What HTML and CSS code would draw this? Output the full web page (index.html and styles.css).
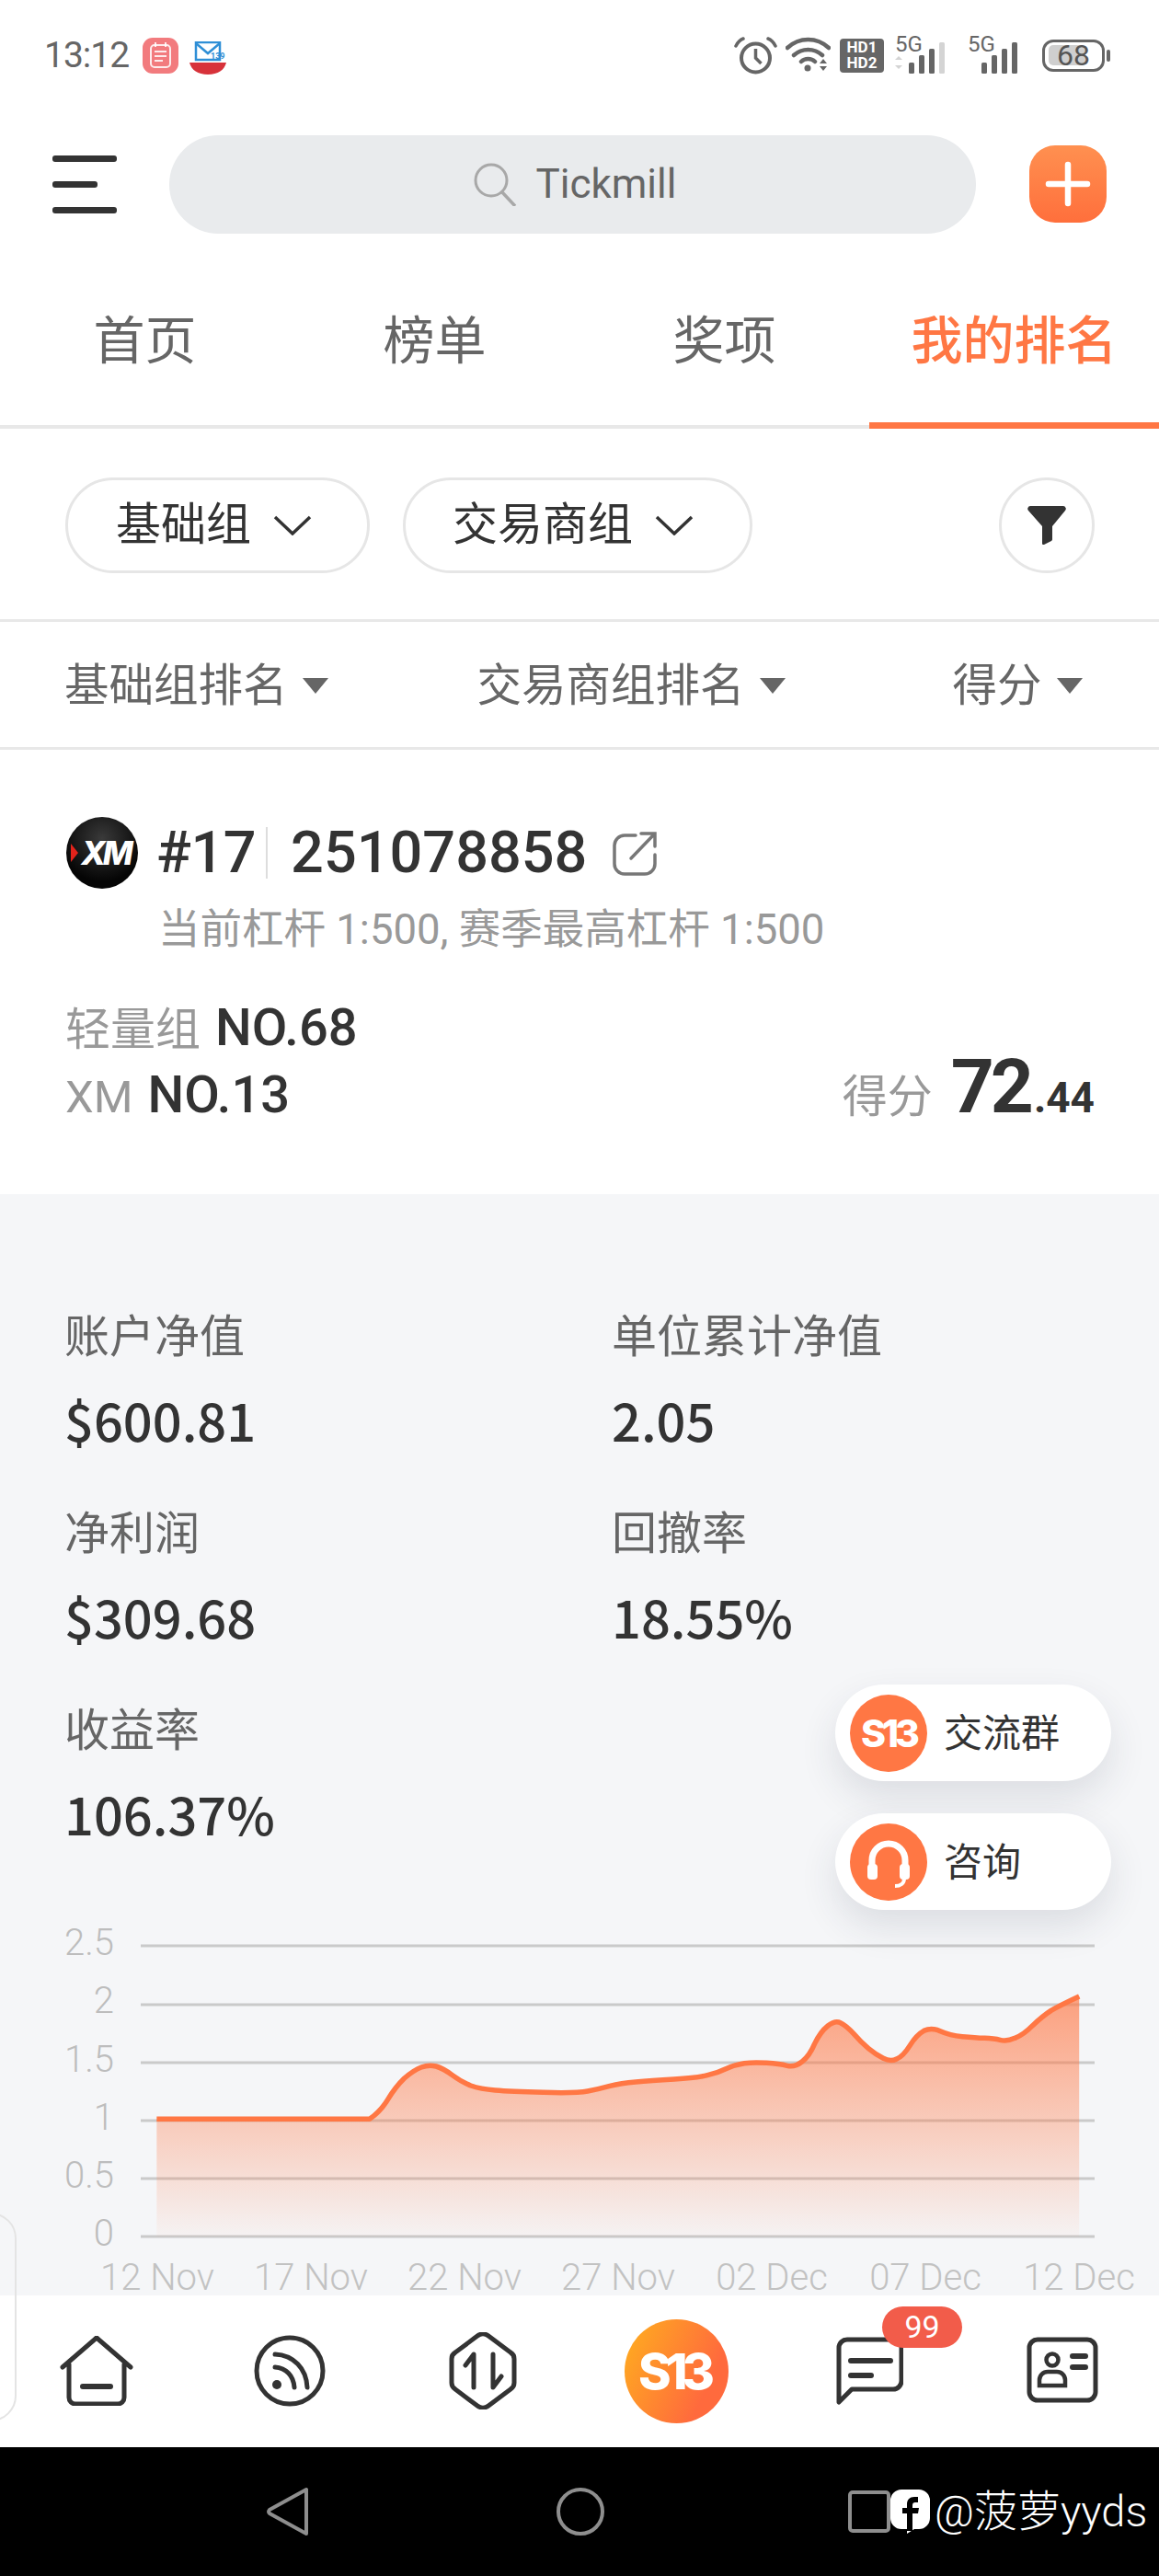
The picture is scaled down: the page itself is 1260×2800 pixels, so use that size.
FILE: index.html
```html
<!DOCTYPE html>
<html lang="zh-CN">
<head>
<meta charset="utf-8">
<title>我的排名</title>
<link rel="stylesheet" href="styles.css">
</head>
<body>
<div class="app">
  <div class="status">
    <div class="status-left">
      <span class="time">13:12</span>
      <svg class="calendar" viewBox="0 0 39 39"><rect width="39" height="39" rx="11" fill="#f27b7e"/><rect x="9" y="8" width="21" height="24" rx="4" fill="none" stroke="#fff" stroke-opacity=".85" stroke-width="2"/><path d="M14 5v5M25 5v5M13 15h13M13 20h13M13 25h9" stroke="#fff" stroke-opacity=".85" stroke-width="2"/></svg>
      <svg class="mail" viewBox="0 0 40 36"><path d="M7 1h26v19H7z" fill="#fff" stroke="#2f8fd6" stroke-width="2.5"/><path d="M7 2l13 11L33 2" fill="none" stroke="#2f8fd6" stroke-width="2.5"/><text x="23" y="19" class="mail-num">139</text><path d="M0 23h40c-2 8-9 13-20 13S2 31 0 23z" fill="#d7323a"/></svg>
    </div>
    <div class="status-right">
      <svg class="alarm" viewBox="0 0 47 41"><circle cx="23.500" cy="23" r="15.500" fill="none" stroke="#666" stroke-width="4"/><path d="M23.500 13v10l6 6" fill="none" stroke="#666" stroke-width="3.500"/><path d="M2 10c2-4 5-7 8-8M45 10c-2-4-5-7-8-8" fill="none" stroke="#666" stroke-width="3.500" stroke-linecap="round"/></svg>
      <svg class="wifi" viewBox="0 0 49 40"><path d="M2 12c13-12 32-12 45 0M9 20c9-8 22-8 31 0M17 27c4-4 11-4 15 0" fill="none" stroke="#666" stroke-width="4.500" stroke-linecap="round"/><circle cx="24" cy="34" r="3.500" fill="#666"/><path d="M37 29l4-5 4 5zM37 32l4 5 4-5z" fill="#666"/></svg>
      <div class="hd"><span>HD1</span><span>HD2</span></div>
      <div class="sim sim-first">
        <span class="sim-label">5G</span>
        <svg class="bars" viewBox="0 0 65 36"><path d="M0 21l4-4 4 4zM0 27l4 4 4-4z" fill="#d4d4d4"/><rect x="15" y="24" width="6" height="12" rx="1.500" fill="#666"/><rect x="26" y="16" width="6" height="20" rx="1.500" fill="#666"/><rect x="37" y="9" width="6" height="27" rx="1.500" fill="#666"/><rect x="48" y="2" width="6" height="34" rx="1.500" fill="#d4d4d4"/></svg>
      </div>
      <div class="sim">
        <span class="sim-label">5G</span>
        <svg class="bars" viewBox="0 0 65 36"><rect x="15" y="24" width="6" height="12" rx="1.500" fill="#666"/><rect x="26" y="16" width="6" height="20" rx="1.500" fill="#666"/><rect x="37" y="9" width="6" height="27" rx="1.500" fill="#666"/><rect x="48" y="2" width="6" height="34" rx="1.500" fill="#666"/></svg>
      </div>
      <div class="battery"><div class="battery-body"><div class="battery-fill"></div><span class="battery-num">68</span></div><div class="battery-tip"></div></div>
    </div>
  </div>

  <header class="top">
    <div class="burger"><i></i><i class="short"></i><i></i></div>
    <div class="search">
      <svg class="search-icon" viewBox="0 0 48 48"><circle cx="20" cy="20" r="17" fill="none" stroke="#a8a8a8" stroke-width="3"/><path d="M32 33l14 15" stroke="#a8a8a8" stroke-width="3.500"/></svg>
      <span>Tickmill</span>
    </div>
    <div class="plus"><svg viewBox="0 0 84 84"><path d="M42 21v42M21 42h42" stroke="#fff" stroke-width="6.500" stroke-linecap="round"/></svg></div>
  </header>

  <nav class="tabs">
    <div class="tab">首页</div>
    <div class="tab">榜单</div>
    <div class="tab">奖项</div>
    <div class="tab active">我的排名</div>
  </nav>

  <section class="filters">
    <div class="chip chip-a">基础组<svg class="chev" viewBox="0 0 42 22"><path d="M2 2l19 18L40 2" fill="none" stroke="#333" stroke-width="3.500"/></svg></div>
    <div class="chip chip-b">交易商组<svg class="chev" viewBox="0 0 42 22"><path d="M2 2l19 18L40 2" fill="none" stroke="#333" stroke-width="3.500"/></svg></div>
    <div class="round"><svg viewBox="0 0 42 42"><path d="M3 0h36a3 3 0 0 1 2 5L27 22v14a2 2 0 0 1-1 2l-8 4a1.500 1.500 0 0 1-2-1V22L1 5a3 3 0 0 1 2-5z" fill="#333"/></svg></div>
  </section>

  <section class="sorts">
    <div class="sort sort-a">基础组排名<i></i></div>
    <div class="sort sort-b">交易商组排名<i></i></div>
    <div class="sort sort-c">得分<i></i></div>
  </section>

  <section class="card">
    <div class="head">
      <div class="xm"><b class="xm-arrow"></b><span>XM</span></div>
      <span class="rank">#17</span>
      <span class="sep"></span>
      <span class="account">251078858</span>
      <svg class="share" viewBox="0 0 48 49"><path d="M25 5H13A11 11 0 0 0 2 16v20a11 11 0 0 0 11 11h22a11 11 0 0 0 11-11V26" fill="none" stroke="#777" stroke-width="3.500" stroke-linecap="round"/><path d="M20 30L45 4M31 3h15v14" fill="none" stroke="#777" stroke-width="3.500" stroke-linecap="round"/></svg>
    </div>
    <p class="lever">当前杠杆 1:500, 赛季最高杠杆 1:500</p>
    <div class="rank-row"><span class="muted">轻量组</span><strong>NO.68</strong></div>
    <div class="rank-row split">
      <div><span class="muted">XM</span><strong>NO.13</strong></div>
      <div class="score"><span class="muted">得分</span><b class="big">72</b><b class="small">.44</b></div>
    </div>
  </section>

  <main class="panel">
    <div class="stats">
      <div class="stat"><div class="stat-label">账户净值</div><div class="stat-value">$600.81</div></div>
      <div class="stat"><div class="stat-label">单位累计净值</div><div class="stat-value">2.05</div></div>
      <div class="stat"><div class="stat-label">净利润</div><div class="stat-value">$309.68</div></div>
      <div class="stat"><div class="stat-label">回撤率</div><div class="stat-value">18.55%</div></div>
      <div class="stat"><div class="stat-label">收益率</div><div class="stat-value">106.37%</div></div>
    </div>

    <svg class="chart" viewBox="0 0 1260 420">
      <defs>
        <linearGradient id="area" gradientUnits="userSpaceOnUse" x1="0" y1="270" x2="0" y2="1053">
          <stop offset="0" stop-color="#ff7744" stop-opacity=".68"/>
          <stop offset="1" stop-color="#ff7744" stop-opacity=".03"/>
        </linearGradient>
      </defs>
      <g class="grid">
        <path d="M153 35H1190M153 99H1190M153 162H1190M153 225H1190M153 288H1190M153 351H1190"/>
      </g>
      <g class="y-labels">
        <text x="124" y="45">2.5</text>
        <text x="124" y="108">2</text>
        <text x="124" y="172">1.5</text>
        <text x="124" y="235">1</text>
        <text x="124" y="298">0.5</text>
        <text x="124" y="361">0</text>
      </g>
      <g transform="scale(.80357 .33333)">
        <path fill="url(#area)" d="M212 670L500 670Q515 645 525 605Q535 565 547 537Q560 510 570 501Q580 492 590 498Q600 505 612 527Q625 550 637 561Q650 572 670 576Q690 580 735 583Q780 586 795 579Q810 572 825 562Q840 553 860 549Q880 545 912 540Q945 535 957 527Q970 520 982 506Q995 492 1007 488Q1020 484 1037 487Q1055 490 1065 496Q1075 502 1085 483Q1095 465 1102 425Q1110 385 1120 366Q1130 347 1137 356Q1145 365 1155 392Q1165 420 1175 440Q1185 460 1195 472Q1205 484 1213 474Q1222 465 1231 430Q1240 395 1250 382Q1260 370 1272 383Q1285 397 1302 401Q1320 405 1332 406Q1345 407 1353 412Q1362 418 1373 406Q1385 395 1397 365Q1410 335 1422 316Q1435 298 1460 270L1460 1053L212 1053Z"/>
        <path class="line" d="M212 670L500 670Q515 645 525 605Q535 565 547 537Q560 510 570 501Q580 492 590 498Q600 505 612 527Q625 550 637 561Q650 572 670 576Q690 580 735 583Q780 586 795 579Q810 572 825 562Q840 553 860 549Q880 545 912 540Q945 535 957 527Q970 520 982 506Q995 492 1007 488Q1020 484 1037 487Q1055 490 1065 496Q1075 502 1085 483Q1095 465 1102 425Q1110 385 1120 366Q1130 347 1137 356Q1145 365 1155 392Q1165 420 1175 440Q1185 460 1195 472Q1205 484 1213 474Q1222 465 1231 430Q1240 395 1250 382Q1260 370 1272 383Q1285 397 1302 401Q1320 405 1332 406Q1345 407 1353 412Q1362 418 1373 406Q1385 395 1397 365Q1410 335 1422 316Q1435 298 1460 270"/>
      </g>
      <g class="x-labels">
        <text x="171" y="409">12 Nov</text>
        <text x="338" y="409">17 Nov</text>
        <text x="505" y="409">22 Nov</text>
        <text x="672" y="409">27 Nov</text>
        <text x="839" y="409">02 Dec</text>
        <text x="1006" y="409">07 Dec</text>
        <text x="1173" y="409">12 Dec</text>
      </g>
    </svg>

    <div class="floats">
      <div class="float"><span class="float-icon s13-small">S13</span><span class="float-text">交流群</span></div>
      <div class="float"><span class="float-icon"><svg viewBox="0 0 84 84"><path d="M24 50V40a18 18 0 0 1 36 0v10" fill="none" stroke="#fff" stroke-width="7"/><rect x="19" y="44" width="11" height="17" rx="4" fill="#fff"/><rect x="54" y="44" width="11" height="17" rx="4" fill="#fff"/><path d="M59 60c0 5-4 8-10 8" fill="none" stroke="#fff" stroke-width="4"/></svg></span><span class="float-text">咨询</span></div>
    </div>
  </main>

  <div class="edge"></div>

  <footer class="tabbar">
    <div class="tb-item">
      <svg class="i-home" viewBox="0 0 80 76"><path d="M3 34L40 2l37 32M10 31v36a7 7 0 0 0 7 7h46a7 7 0 0 0 7-7V31" fill="none" stroke="#333" stroke-width="5" stroke-linecap="round" stroke-linejoin="round"/><path d="M25 55h30" stroke="#333" stroke-width="6" stroke-linecap="round"/></svg>
    </div>
    <div class="tb-item">
      <svg class="i-rss" viewBox="0 0 80 80"><circle cx="40" cy="40" r="36" fill="none" stroke="#333" stroke-width="5"/><circle cx="26" cy="55" r="5" fill="#333"/><path d="M24 36c12 1 20 9 21 22M24 22c20 1 34 15 35 36" fill="none" stroke="#333" stroke-width="5" stroke-linecap="round"/></svg>
    </div>
    <div class="tb-item">
      <svg class="i-hex" viewBox="0 0 74 84"><path d="M31 4a10 10 0 0 1 12 0l24 18a8 8 0 0 1 4 7v26a8 8 0 0 1-4 7L43 80a10 10 0 0 1-12 0L7 62a8 8 0 0 1-4-7V29a8 8 0 0 1 4-7z" fill="none" stroke="#333" stroke-width="5"/><path d="M27 60V24L18 36M48 24v36l9-12" fill="none" stroke="#333" stroke-width="5" stroke-linecap="round" stroke-linejoin="round"/></svg>
    </div>
    <div class="tb-item">
      <span class="s13">S13</span>
    </div>
    <div class="tb-item">
      <svg class="i-msg" viewBox="0 0 74 76"><path d="M4 72V13a9 9 0 0 1 9-9h50a9 9 0 0 1 9 9v36a9 9 0 0 1-9 9H18z" fill="none" stroke="#333" stroke-width="5" stroke-linejoin="round"/><path d="M17 27h43M17 43h22" stroke="#333" stroke-width="6" stroke-linecap="round"/></svg>
      <span class="badge">99</span>
    </div>
    <div class="tb-item">
      <svg class="i-card" viewBox="0 0 78 72"><rect x="3" y="3" width="72" height="66" rx="9" fill="none" stroke="#333" stroke-width="5"/><circle cx="28" cy="25" r="6.500" fill="none" stroke="#333" stroke-width="4.500"/><path d="M14 53V47a9 9 0 0 1 9-9h10a9 9 0 0 1 9 9v6z" fill="none" stroke="#333" stroke-width="4.500"/><path d="M50 21h14M50 33h14" stroke="#333" stroke-width="6" stroke-linecap="round"/></svg>
    </div>
  </footer>

  <div class="sysnav">
    <svg class="nav-back" viewBox="0 0 46 54"><path d="M43 3v48L3 29a3 3 0 0 1 0-4z" fill="none" stroke="#8e8e8e" stroke-width="4" stroke-linejoin="round"/></svg>
    <svg class="nav-home" viewBox="0 0 52 52"><circle cx="26" cy="26" r="24" fill="none" stroke="#8e8e8e" stroke-width="4"/></svg>
    <span class="nav-recent"></span>
    <div class="watermark">
      <svg class="fb" viewBox="0 0 43 48"><path d="M12 0h19a12 12 0 0 1 12 12v19a12 12 0 0 1-12 12H26l-8 5v-5h-6A12 12 0 0 1 0 31V12A12 12 0 0 1 12 0z" fill="#fff"/><path d="M30 8h-4c-5 0-8 3-8 8v4h-5v6h5v19h6V26h6l1-6h-7v-3c0-2 1-3 3-3h3z" fill="#000"/></svg>
      <span>@菠萝yyds</span>
    </div>
  </div>
</div>
</body>
</html>
```
FILE: styles.css
```css
* { box-sizing: border-box; }
html, body { margin: 0; padding: 0; background: #fff; }
body { font-family: "Roboto", "Noto Sans CJK SC", sans-serif; color: #333; }
.app { position: relative; width: 1260px; height: 2800px; overflow: hidden; }

/* status bar */
.status { height: 120px; padding: 0 53px 0 48px; display: flex; justify-content: space-between; align-items: center; }
.status-left { display: flex; align-items: center; }
.time { font-size: 39px; letter-spacing: -1px; color: #666; width: 107px; line-height: 40px; }
.calendar { width: 39px; height: 39px; display: block; }
.mail { width: 40px; height: 36px; margin: 6px 0 0 12px; display: block; }
.mail-num { font: 700 9px "Roboto", sans-serif; fill: #2f8fd6; }
.status-right { display: flex; align-items: center; }
.alarm { width: 47px; height: 41px; display: block; }
.wifi { width: 49px; height: 40px; margin-left: 9px; display: block; }
.hd { width: 48px; height: 37px; margin-left: 10px; background: #666; border-radius: 4px; color: #fff; font-size: 17px; font-weight: 700; line-height: 17px; display: flex; flex-direction: column; align-items: center; justify-content: center; }
.hd span { display: block; }
.sim { position: relative; width: 79px; height: 40px; }
.sim-first { margin-left: 12px; }
.sim-label { position: absolute; left: 0; top: -4px; font-size: 24px; color: #666; line-height: 24px; }
.bars { position: absolute; left: 0; bottom: 0; width: 65px; height: 36px; display: block; }
.battery { display: flex; align-items: center; margin-left: 2px; }
.battery-body { position: relative; width: 68px; height: 35px; border: 3.500px solid #666; border-radius: 12px; display: flex; align-items: center; justify-content: center; }
.battery-fill { position: absolute; left: 4px; top: 3.500px; bottom: 3.500px; width: 40px; background: #cfcfcf; border-radius: 5px; }
.battery-num { position: relative; font-size: 32px; color: #555; line-height: 30px; }
.battery-tip { width: 4px; height: 13px; margin-left: 2px; background: #666; border-radius: 2px; }

/* header */
.top { height: 160px; padding: 0 57px; display: flex; align-items: center; }
.burger { width: 70px; display: flex; flex-direction: column; gap: 21px; }
.burger i { display: block; height: 7px; background: #333; border-radius: 3px; }
.burger i.short { width: 49px; }
.search { width: 878px; height: 107px; margin-left: 57px; background: #e9ebed; border-radius: 54px; display: flex; align-items: center; justify-content: center; color: #666; font-size: 44px; padding-left: 5px; }
.search-icon { width: 48px; height: 48px; margin-right: 20px; display: block; }
.plus { width: 84px; height: 84px; margin-left: 58px; border-radius: 28px; background: linear-gradient(180deg, #ff9050, #ff6f3c); }
.plus svg { width: 84px; height: 84px; display: block; }

/* tabs */
.tabs { height: 186px; display: flex; border-bottom: 4px solid #e8e8e8; }
.tab { width: 315px; height: 186px; padding-top: 54px; text-align: center; font-size: 56px; line-height: 74px; color: #666; }
.tab.active { color: #ff7744; font-weight: 500; border-bottom: 7px solid #ff7744; }

/* filters */
.filters { height: 210px; padding: 3px 70px 0 71px; display: flex; align-items: center; border-bottom: 3px solid #e8e8e8; }
.chip { height: 104px; border: 3px solid #e6e6e6; border-radius: 52px; font-size: 49px; line-height: 58px; color: #333; display: flex; align-items: center; }
.chip-a { width: 331px; padding-left: 52px; }
.chip-b { width: 380px; margin-left: 36px; padding-left: 51px; }
.chev { width: 42px; height: 22px; margin: 0 0 0 24px; display: block; }
.round { width: 104px; height: 104px; margin-left: auto; border: 3px solid #e6e6e6; border-radius: 50%; display: flex; align-items: center; justify-content: center; }
.round svg { width: 42px; height: 42px; display: block; }

/* sort row */
.sorts { height: 139px; padding: 3px 0 0 70px; display: flex; align-items: center; border-bottom: 3px solid #e8e8e8; }
.sort { font-size: 48.500px; line-height: 60px; color: #666; display: flex; align-items: center; }
.sort i { display: block; width: 0; height: 0; margin-left: 16px; border-style: solid; border-width: 17px 14px 0; border-color: #666 transparent transparent; }
.sort-b { margin-left: 162px; }
.sort-c { margin-left: 182px; }

/* card */
.card { height: 483px; padding: 73px 70px 0 72px; }
.head { height: 78px; display: flex; align-items: center; }
.xm { position: relative; width: 78px; height: 78px; border-radius: 50%; background: radial-gradient(circle at 50% 30%, #3a3a3a, #050505 70%); color: #fff; display: flex; align-items: center; justify-content: center; }
.xm span { font-family: "Inter", sans-serif; font-size: 35px; font-weight: 800; font-style: italic; letter-spacing: -3px; padding-left: 8px; }
.xm-arrow { position: absolute; left: 5px; top: 29px; width: 0; height: 0; border-style: solid; border-width: 10px 0 10px 8px; border-color: transparent transparent transparent #e3231b; }
.rank { margin-left: 20px; font-size: 63px; font-weight: 500; line-height: 70px; letter-spacing: -.500px; }
.sep { width: 2px; height: 56px; margin: 0 25px 0 11px; background: #ddd; }
.account { font-size: 63px; font-weight: 500; line-height: 70px; }
.share { width: 48px; height: 49px; margin-left: 28px; display: block; }
.lever { margin: 20px 0 0 100px; font-size: 45.500px; line-height: 50px; color: #999; white-space: nowrap; }
.rank-row { display: flex; align-items: baseline; height: 74px; line-height: 74px; margin-left: -1px; }
.lever + .rank-row { margin-top: 44px; }
.rank-row strong { font-size: 56px; font-weight: 500; margin-left: 16px; }
.muted { font-size: 49px; color: #999; }
.rank-row.split { justify-content: space-between; margin-top: -10px; }
.big { font-size: 82px; font-weight: 700; letter-spacing: -4px; margin-left: 20px; }
.small { font-size: 46px; font-weight: 700; margin-left: 4px; }

/* panel */
.panel { position: relative; height: 1197px; background: #f5f6f8; padding-top: 121px; }
.stats { display: grid; grid-template-columns: 595px 595px; row-gap: 50px; padding-left: 70px; }
.stat-label { height: 70px; line-height: 70px; font-size: 49px; color: #666; }
.stat-value { height: 80px; margin-top: 14px; line-height: 80px; font-size: 56px; font-weight: 500; color: #333; font-family: "Noto Sans CJK SC", sans-serif; }
.chart { display: block; width: 1260px; height: 420px; margin-top: 69px; }
.grid path { stroke: #cacaca; stroke-width: 3; fill: none; }
.y-labels text { font: 300 40px "Roboto", sans-serif; fill: #bdbdbd; text-anchor: end; }
.x-labels text { font: 300 40px "Roboto", sans-serif; fill: #c2c2c2; text-anchor: middle; }
.line { fill: none; stroke: #ff7744; stroke-width: 5.500; vector-effect: non-scaling-stroke; stroke-linejoin: round; }
.floats { position: absolute; top: 533px; right: 52px; display: flex; flex-direction: column; gap: 35px; }
.float { width: 300px; height: 105px; padding-left: 16px; background: #fff; border-radius: 53px; box-shadow: 0 18px 40px rgba(40, 50, 70, .12); display: flex; align-items: center; gap: 18px; font-size: 42px; color: #333; }
.float-text { padding-bottom: 6px; }
.float-icon { width: 84px; height: 84px; border-radius: 50%; background: #ff7744; color: #fff; display: flex; align-items: center; justify-content: center; }
.float-icon svg { width: 84px; height: 84px; display: block; }
.s13-small { font-family: "Inter", sans-serif; font-size: 41px; font-weight: 800; letter-spacing: -4px; }

.edge { position: absolute; left: -40px; top: 2405px; width: 58px; height: 227px; border: 2px solid #e4e4e4; border-radius: 28px; z-index: 2; pointer-events: none; }

/* tab bar */
.tabbar { position: relative; height: 165px; background: #fff; display: flex; }
.tb-item { position: relative; width: 210px; height: 165px; display: flex; align-items: center; justify-content: center; }
.i-home { width: 80px; height: 76px; display: block; margin-top: -2px; }
.i-rss { width: 80px; height: 80px; display: block; margin-top: -2px; }
.i-hex { width: 74px; height: 84px; display: block; margin-top: -2px; }
.s13 { width: 113px; height: 113px; border-radius: 50%; background: linear-gradient(115deg, #ffab20 5%, #ff6a3d 75%); color: #fff; font-family: "Inter", sans-serif; font-size: 54px; font-weight: 800; letter-spacing: -6px; display: flex; align-items: center; justify-content: center; padding-right: 5px; margin-top: -1px; }
.i-msg { width: 74px; height: 76px; display: block; margin-top: -1px; }
.i-card { width: 78px; height: 72px; display: block; margin-top: -3px; }
.badge { position: absolute; left: 119px; top: 12px; width: 87px; height: 45px; border-radius: 23px; background: #f25c4a; color: #fff; font-size: 34px; line-height: 45px; text-align: center; }

/* system nav */
.sysnav { position: relative; height: 140px; background: #000; display: flex; align-items: center; padding-left: 290px; }
.nav-back { width: 46px; height: 54px; display: block; }
.nav-home { width: 52px; height: 52px; margin-left: 269px; display: block; }
.nav-recent { width: 46px; height: 46px; margin-left: 265px; border: 4px solid #8e8e8e; border-radius: 5px; display: block; }
.watermark { position: absolute; left: 968px; top: 40px; display: flex; align-items: center; gap: 5px; color: #fff; font-size: 47px; line-height: 60px; font-family: "Roboto", "Noto Sans CJK SC", sans-serif; font-weight: 300; }
.fb { width: 43px; height: 48px; display: block; }
```
